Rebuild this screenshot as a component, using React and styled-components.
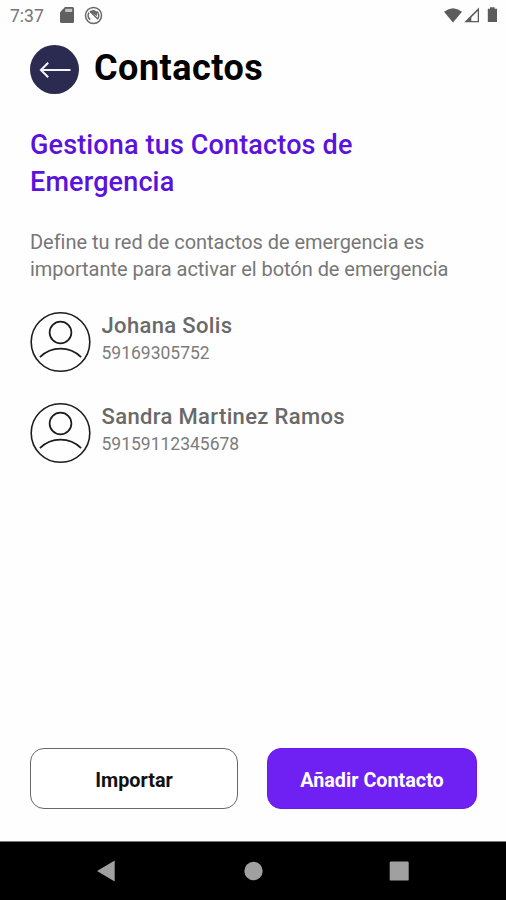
import React from "react";
import styled, { createGlobalStyle } from "styled-components";

const contacts = [
  { name: "Johana Solis", phone: "59169305752" },
  { name: "Sandra Martinez Ramos", phone: "59159112345678" }
];

const Avatar = () => (
  <svg width="62" height="62" viewBox="0 0 62 62" fill="none" stroke="#1c1c1c">
    <circle cx="30.5" cy="31" r="29.3" strokeWidth="1.6" />
    <circle cx="30.5" cy="21.5" r="10.9" strokeWidth="1.7" />
    <path d="M9.9 46.2Q18.5 37.7 30.5 37.7T51.1 46.2" strokeWidth="1.7" />
  </svg>
);

const StatusIcons = () => (
  <svg width="56" height="20" viewBox="0 0 56 20" fill="#5c5c5c">
    <path d="M1 6.8Q10 -.4 19 6.8L10 17.6Z" />
    <path d="M36 2.5V17.2H21.2ZM34.7 6L28.3 12.4V15.9H34.7Z" fillRule="evenodd" />
    <path d="M44.8 3.8H47V2.2h4.6v1.6H54v13.2H44.8Z" />
  </svg>
);

const App = () => {
  return (
    <Screen>
      <GlobalStyle />
      <StatusBar>
        <Clock>7:37</Clock>
        <svg width="14" height="16" viewBox="0 0 14 16" fill="#606060">
          <path d="M5 0h7.5Q14 0 14 1.5v13q0 1.5-1.5 1.5h-11Q0 16 0 14.5V5.2Z" />
          <path d="M5.2 1.8h7v3.2h-7z" fill="#c4c4c4" />
        </svg>
        <svg width="19" height="19" viewBox="0 0 19 19" fill="none" stroke="#686868">
          <circle cx="9.5" cy="9.5" r="8" strokeWidth="1.5" />
          <path d="M6.3 13.6A5 5 0 0 1 5 6.5M12.9 5.6A5 5 0 0 1 13.6 12.8" strokeWidth="1.5" />
          <path d="M5.8 5.3L14 13.3M7 5.4Q10 3.8 12.4 6.1V9Z" fill="#686868" strokeWidth="1.4" />
        </svg>
        <StatusIcons />
      </StatusBar>
      <Content>
        <Header>
          <BackButton aria-label="Volver">
            <svg width="32" height="16" viewBox="0 0 32 16" fill="none" stroke="#f4f4fa" strokeWidth="2">
              <path d="M31.5 8H1.5M9.2 .8L1.9 8L9.2 15.2" />
            </svg>
          </BackButton>
          <h1>Contactos</h1>
        </Header>
        <Title>
          Gestiona tus Contactos de
          <br />
          Emergencia
        </Title>
        <Description>
          Define tu red de contactos de emergencia es
          <br />
          importante para activar el botón de emergencia
        </Description>
        <ContactList>
          {contacts.map(c => (
            <Contact key={c.phone}>
              <Avatar />
              <div>
                <Name>{c.name}</Name>
                <Phone>{c.phone}</Phone>
              </div>
            </Contact>
          ))}
        </ContactList>
        <Actions>
          <Button>Importar</Button>
          <Button $primary>Añadir Contacto</Button>
        </Actions>
      </Content>
      <NavBar>
        <svg width="506" height="58" viewBox="0 0 506 58" fill="#a0a0a0">
          <path d="M97 29L114.7 18.5V39.5Z" />
          <circle cx="253.5" cy="29" r="9.2" />
          <rect x="389.7" y="19.6" width="19" height="19" rx="1.2" />
        </svg>
      </NavBar>
    </Screen>
  );
};

export default App;

const GlobalStyle = createGlobalStyle`
  * {
    box-sizing: border-box;
  }
  body {
    margin: 0;
    background: #fefefe;
    font-family: Roboto, "Liberation Sans", sans-serif;
  }
  h1, h2, h3, p {
    margin: 0;
  }
  svg {
    display: block;
    flex-shrink: 0;
  }
`;

const Screen = styled.div`
  width: 506px;
  height: 900px;
  display: flex;
  flex-direction: column;
  overflow: hidden;
`;

const StatusBar = styled.div`
  height: 32px;
  padding: 0 7px 2px 10px;
  display: flex;
  align-items: center;
  & svg:nth-of-type(1) {
    margin-left: 15px;
  }
  & svg:nth-of-type(2) {
    margin-left: 10px;
  }
  & svg:last-child {
    margin-left: auto;
  }
`;

const Clock = styled.span`
  width: 35px;
  padding-top: 1px;
  font-size: 17.5px;
  white-space: nowrap;
  color: #757575;
`;

const Content = styled.div`
  flex: 1;
  padding: 12px 29px 32px 30px;
  display: flex;
  flex-direction: column;
`;

const Header = styled.div`
  height: 50px;
  display: flex;
  align-items: center;
  & h1 {
    margin: -2px 0 0 15px;
    font-size: 36px;
    font-weight: 700;
    line-height: 44px;
    letter-spacing: 0.5px;
    color: #000;
  }
`;

const BackButton = styled.button`
  width: 49px;
  height: 49px;
  padding: 1px 0 0;
  border: 0;
  border-radius: 50%;
  background: #2b2a50;
  display: flex;
  align-items: center;
  justify-content: center;
`;

const Title = styled.h2`
  margin-top: 33px;
  font-size: 27px;
  font-weight: 500;
  line-height: 37px;
  letter-spacing: 0.15px;
  white-space: nowrap;
  color: #5b12dc;
`;

const Description = styled.p`
  margin-top: 28px;
  font-size: 20px;
  line-height: 27px;
  letter-spacing: -0.04px;
  white-space: nowrap;
  color: #777;
`;

const ContactList = styled.div`
  margin-top: 28px;
  display: flex;
  flex-direction: column;
  gap: 29px;
`;

const Contact = styled.div`
  display: flex;
  gap: 10px;
  & > svg {
    margin-left: -0.5px;
  }
`;

const Name = styled.h3`
  padding-top: 1px;
  font-size: 22px;
  font-weight: 500;
  line-height: 28px;
  letter-spacing: 0.35px;
  white-space: nowrap;
  color: #696969;
`;

const Phone = styled.p`
  font-size: 17.5px;
  line-height: 26px;
  color: #7c7c7c;
`;

const Actions = styled.div`
  margin-top: auto;
  display: grid;
  grid-template-columns: 208px 210px;
  justify-content: space-between;
`;

const Button = styled.button`
  height: 61px;
  padding: 4px 0 0;
  border: 1px solid ${props => (props.$primary ? "#6a1be9" : "#686868")};
  border-radius: 14px;
  background: ${props => (props.$primary ? "#6f20f2" : "#fff")};
  color: ${props => (props.$primary ? "#fff" : "#111")};
  font-family: inherit;
  font-size: 19.8px;
  font-weight: 700;
`;

const NavBar = styled.div`
  height: 59px;
  border-top: 1px solid #777;
  background: #000;
`;
